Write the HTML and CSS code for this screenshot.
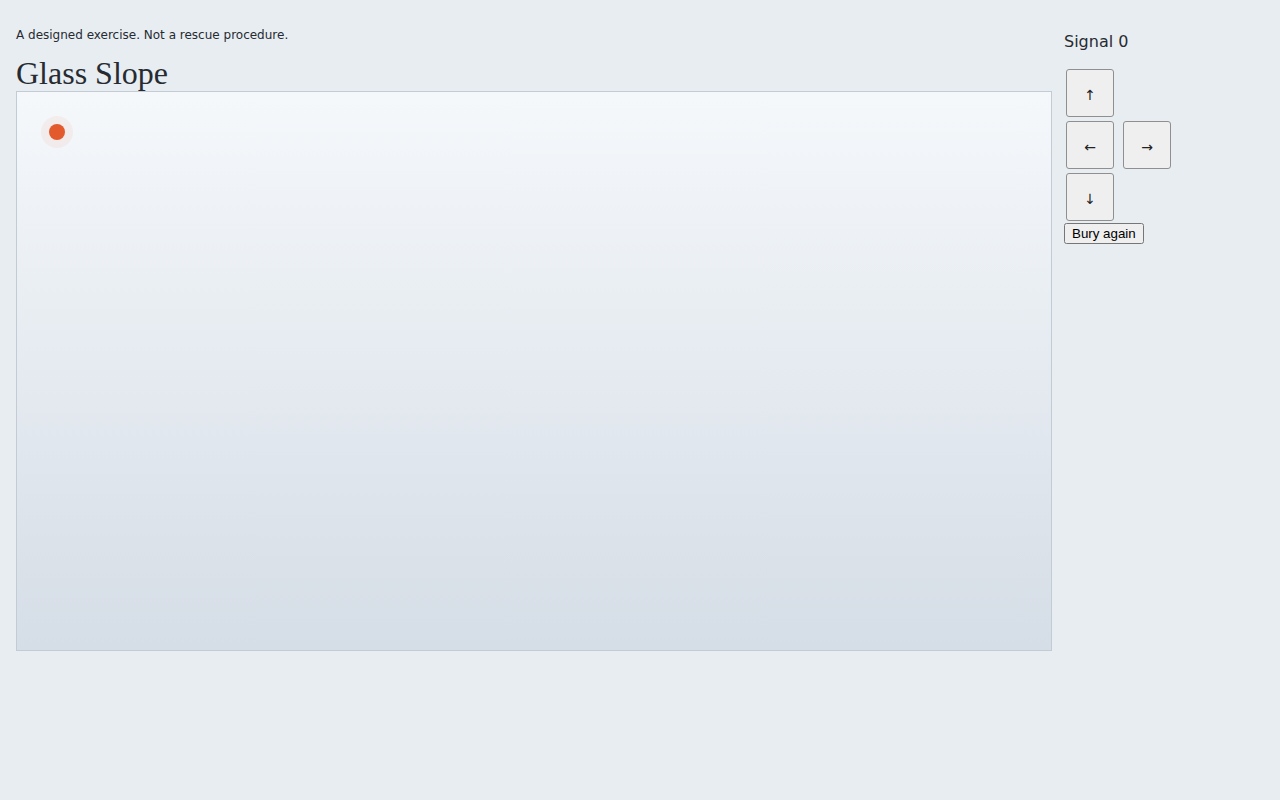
FILE: index.html
```html
<!DOCTYPE html>
<html>
<head>
    <meta charset="utf-8">
    <title>Glass Slope</title>
    <link rel="stylesheet" href="styles.css">
</head>
<body>
    <div class="page">
        <main class="field">
            <p class="note">A designed exercise. Not a rescue procedure.</p>
            <h1>Glass Slope</h1>
            <div class="board">
                <span class="probe"></span>
            </div>
        </main>

        <aside class="controls">
            <div class="signal">Signal 0</div>
            <div class="pad">
                <div class="pad-row"><button class="key">↑</button></div>
                <div class="pad-row"><button class="key">←</button> <button class="key">→</button></div>
                <div class="pad-row"><button class="key">↓</button></div>
            </div>
            <button class="reset">Bury again</button>
        </aside>
    </div>
</body>
</html>
```

FILE: styles.css
```css
:root {
    --snowfield: #e8edf1;
    --ink:       #262b31;
    --ember:     #e35a2c;
    --frame:     #c3cbd5;
}

body {
    margin: 0;
    padding: 16px;

    color: var( --ink );
    background-color: var( --snowfield );
    font-family: "DejaVu Sans", sans-serif;
}

.page {
    display: flex;
    gap: 12px;
}

.field {
    width: 1036px;
}

.note {
    margin: 12px 0 12px;
    font-size: 12px;
    line-height: 15px;
}

h1 {
    margin: 0;
    font-family: "Liberation Serif", serif;
    font-size: 32px;
    font-weight: normal;
    line-height: 36px;
}

.board {
    position: relative;
    height: 558px;

    border: 1px solid var( --frame );
    background: linear-gradient( to bottom, #f5f8fb, #d5dde6 );
}

.probe {
    position: absolute;
    left: 32px;
    top: 32px;

    width: 16px;
    height: 16px;
    border-radius: 50%;

    background-color: var( --ember );
    box-shadow: 0 0 0 8px rgba( 240, 110, 60, 0.07 );
}

.signal {
    margin: 16px 0 16px;
    font-size: 16px;
    line-height: 19px;
}

.pad-row {
    font-size: 0;
    word-spacing: 5px;
}

.key {
    width: 48px;
    height: 48px;
    margin: 2px;
    padding: 3px 0 0;

    font-family: "DejaVu Sans", sans-serif;
    font-size: 14px;
    color: #222;
    background-color: #efefef;
    border: 1px solid #8f8f8f;
    border-radius: 3px;
}

.reset {
    margin-top: 0;
    font-family: "Liberation Sans", sans-serif;
    font-size: 13.33px;
}
```
